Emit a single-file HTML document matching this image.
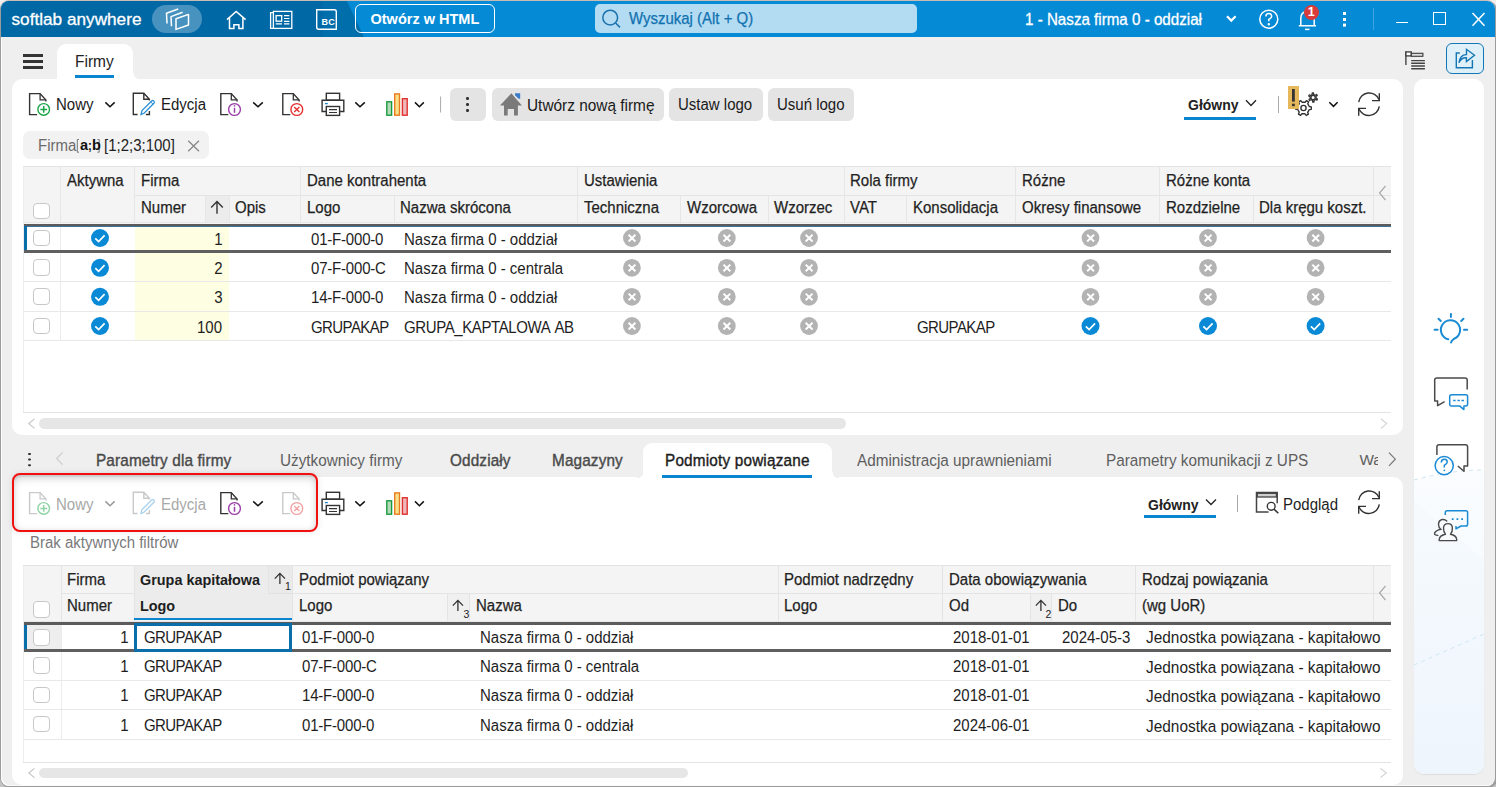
<!DOCTYPE html>
<html><head><meta charset="utf-8">
<style>
*{box-sizing:border-box;}
html,body{margin:0;padding:0;}
body{width:1496px;height:787px;position:relative;overflow:hidden;background:linear-gradient(#f2eeeb 0,#f2eeeb 50%,#c4c4c4 50%);font-family:"Liberation Sans",sans-serif;font-size:15px;color:#222;}
.a{position:absolute;}
.t{position:absolute;white-space:nowrap;line-height:1;}
#win{left:1px;top:1px;width:1494px;height:785px;border-radius:8px;background:#efefef;overflow:hidden;box-shadow:0 -1px 0 0 #c9bcb5,-1px 0 0 0 #9c9c9c,1px 1px 0 1px #9c9c9c,inset 1px -1px 0 0 #fbfbfb;}
#tb{left:0;top:0;width:1494px;height:36px;background:#058ad6;}
#tbdark{left:0;top:0;width:370px;height:36px;background:linear-gradient(90deg,#0068a5 0,#0068a5 322px,#006eab 322px);clip-path:polygon(0 0,346px 0,363px 36px,0 36px);}
.panel{background:#fff;border-radius:10px;}
</style></head>
<body>
<div id="win" class="a">
  <div id="tb" class="a"></div>
  <div id="tbdark" class="a"></div>
</div>

<!-- title bar content -->
<div class="t" style="left:11.5px;top:10.6px;font-size:17.2px;color:#fff;-webkit-text-stroke:0.3px #fff;">softlab anywhere</div>
<div class="a" style="left:152px;top:5px;width:50px;height:28px;border-radius:14px;background:rgba(255,255,255,0.28);"></div>
<svg class="a" style="left:160px;top:4px" width="36" height="30" viewBox="160 4 36 30" fill="none" stroke="#fff" stroke-width="1.5" stroke-linejoin="round">
 <path d="M167 23.5 L166.5 13.2 L178.2 9"/>
 <path d="M171.5 26.3 L171 16.6 L182.6 12.2"/>
 <path d="M176 18.8 L188.5 14.4 L188.5 25 L176 29.4 Z"/>
</svg>
<svg class="a" style="left:225px;top:9px" width="24" height="22" viewBox="225 9 24 22" fill="none" stroke="#fff" stroke-width="1.5">
 <path d="M227 19.6 L236.2 11.4 L245.6 19.6"/>
 <path d="M229.5 18 V28.6 H233.9 V24.7 H238.9 V28.6 H242.9 V18"/>
</svg>
<svg class="a" style="left:268px;top:9px" width="26" height="22" viewBox="268 9 26 22" fill="none" stroke="#fff" stroke-width="1.3">
 <rect x="273.4" y="11.4" width="18.4" height="17"/>
 <path d="M273.4 12.6 H270.6 V28.4 H273.4"/>
 <rect x="276.1" y="15.6" width="5.6" height="5.6"/>
 <path d="M284 15.6 H289.4 M284 18.5 H289.4 M284 21.3 H289.4 M275.8 23.9 H282 M284 23.9 H289.4" stroke-width="1.2"/>
</svg>
<svg class="a" style="left:314px;top:7px" width="25" height="25" viewBox="314 7 25 25" fill="none" stroke="#fff" stroke-width="1.4">
 <path d="M316.7 9.8 H334.3 Q336.3 9.8 336.3 11.8 V29.2 H318.7 Q316.7 29.2 316.7 27.2 Z"/>
</svg>
<div class="t" style="left:321.5px;top:18.2px;font-size:9px;font-weight:700;color:#fff;letter-spacing:0.3px;">BC</div>
<div class="a" style="left:355px;top:4px;width:140px;height:29px;border:1.8px solid #fff;border-radius:6px;"></div>
<div class="t" style="left:370.5px;top:12px;font-size:14.5px;font-weight:700;color:#fff;">Otwórz w HTML</div>
<div class="a" style="left:595px;top:4px;width:322px;height:29px;border-radius:5px;background:#b3dcf3;"></div>
<svg class="a" style="left:600px;top:6px" width="26" height="26" viewBox="600 6 26 26" fill="none" stroke="#1a72ad" stroke-width="1.5">
 <circle cx="610.2" cy="17.6" r="7.4"/>
 <path d="M615.6 23 L620 27.4"/>
</svg>
<div class="t" style="left:628.5px;top:11px;font-size:15.6px;color:#1272b0;-webkit-text-stroke:0.25px #1272b0;transform:scaleX(0.96);transform-origin:0 0;">Wyszukaj (Alt + Q)</div>
<div class="t" style="left:1025px;top:11.6px;font-size:15.8px;color:#fff;-webkit-text-stroke:0.3px #fff;transform:scaleX(0.96);transform-origin:0 0;">1 - Nasza firma 0 - oddział</div>
<svg class="a" style="left:1224px;top:13px" width="14" height="12" viewBox="1224 13 14 12" fill="none" stroke="#fff" stroke-width="2.2">
 <path d="M1227 16.3 L1231.3 20.6 L1235.6 16.3"/>
</svg>
<svg class="a" style="left:1256px;top:7px" width="26" height="24" viewBox="1256 7 26 24" fill="none" stroke="#fff" stroke-width="1.5">
 <circle cx="1268.8" cy="19.2" r="9"/>
 <path d="M1265.9 16.6 Q1265.9 13.6 1268.8 13.6 Q1271.7 13.6 1271.7 16.3 Q1271.7 18 1268.8 19.4 V21.3"/>
 <circle cx="1268.8" cy="24.2" r="0.5" fill="#fff"/>
</svg>
<svg class="a" style="left:1294px;top:5px" width="28" height="28" viewBox="1294 5 28 28" fill="none" stroke="#fff" stroke-width="1.5">
 <path d="M1300.8 25.8 V18.5 Q1300.8 11.5 1307.5 11.5 Q1314.2 11.5 1314.2 18.5 V25.8 M1298.8 25.8 H1316"/>
 <path d="M1305 29.4 H1309.5"/>
</svg>
<div class="a" style="left:1303.9px;top:4.5px;width:15.6px;height:15.6px;border-radius:50%;background:#d83b3b;"></div>
<div class="t" style="left:1307.8px;top:5.8px;font-size:12.5px;font-weight:700;color:#fff;">1</div>
<div class="a" style="left:1343px;top:12.3px;width:3.2px;height:3.2px;background:#fff;box-shadow:0 6px 0 #fff,0 11.6px 0 #fff;"></div>
<div class="a" style="left:1372.5px;top:8px;width:1.2px;height:22px;background:#3ea3e0;"></div>
<div class="a" style="left:1395.5px;top:21.6px;width:12.5px;height:1.6px;background:#fff;"></div>
<div class="a" style="left:1433.4px;top:12.3px;width:12.4px;height:12.4px;border:1.5px solid #fff;"></div>
<svg class="a" style="left:1470px;top:11px" width="17" height="17" viewBox="1470 11 17 17" fill="none" stroke="#fff" stroke-width="1.5">
 <path d="M1472.5 13 L1484.5 25.8 M1484.5 13 L1472.5 25.8"/>
</svg>

<!-- panels -->
<div class="a panel" style="left:12px;top:79px;width:1391px;height:356px;"></div>
<div class="a panel" style="left:12px;top:477px;width:1391px;height:308px;"></div>
<div class="a panel" style="left:1414px;top:79px;width:70px;height:695px;"></div>


<!-- tabs row 1 -->
<div class="a" style="left:23px;top:54px;width:20px;height:2.5px;background:#333;box-shadow:0 6px 0 #333,0 12px 0 #333;"></div>
<div class="a" style="left:57px;top:44px;width:76px;height:40px;background:#fff;border-radius:9px 9px 0 0;"></div>
<div class="a" style="left:75px;top:75px;width:39px;height:3px;background:#0a86d0;"></div>

<!-- top right icons -->
<svg class="a" style="left:1402px;top:48px" width="26" height="24" viewBox="1402 48 26 24" fill="none" stroke="#444">
 <path d="M1405.9 51.4 V65" stroke-width="1.4"/>
 <rect x="1405.9" y="51.9" width="5.4" height="4" fill="#fff" stroke="#3a3a3a" stroke-width="1.3"/>
 <rect x="1411.3" y="53.3" width="11.6" height="3" fill="#ddd" stroke="#3a3a3a" stroke-width="1.1"/>
 <path d="M1411.2 60.6 H1424.9 M1411.2 63.3 H1424.9 M1411.2 66 H1424.9 M1411.2 68.8 H1424.9" stroke-width="1.4" stroke="#444"/>
</svg>
<div class="a" style="left:1446px;top:43px;width:38px;height:31px;border:1.5px solid #1477b5;border-radius:6px;background:#dff0f9;"></div>
<svg class="a" style="left:1450px;top:46px" width="30" height="26" viewBox="1450 46 30 26" fill="none" stroke="#1477b5" stroke-width="1.4" stroke-linejoin="miter">
 <path d="M1459.8 53 H1456.3 V67.8 H1472.4 V60"/>
 <path d="M1459 62.8 Q1460 54.5 1466.5 54.6 V49.3 L1474.5 55.3 L1466.4 61.6 V57.8 Q1461.5 57.2 1459 62.8 Z"/>
</svg>

<!-- toolbar 1 -->
<svg class="a" style="left:0;top:80px" width="446" height="44" viewBox="0 80 446 44">
 <path d="M37.1 114.6 H29.6 V93.6 H40.10000000000001 L45.900000000000006 100.1 V101.6" fill="none" stroke="#333" stroke-width="1.4"/><path d="M40.10000000000001 93.6 V99.89999999999999 H45.900000000000006" fill="none" stroke="#333" stroke-width="1.3"/>
 <circle cx="43.7" cy="109.4" r="5.8" fill="#fff" stroke="#1aa548" stroke-width="1.4"/>
 <path d="M40.3 109.4 H47.1 M43.7 106 V112.8" stroke="#1aa548" stroke-width="1.5"/>
 <path d="M105.4 102.4 L110 106.8 L114.6 102.4" fill="none" stroke="#111" stroke-width="1.5"/>
 <path d="M137.6 114.5 H133.3 V93.3 H143.8 L149.4 99.2 V100.5 M143.8 93.3 V99.2 H149.4 M145.9 114.5 H149.4 V111" fill="none" stroke="#333" stroke-width="1.4"/>
 <path d="M141 114.6 L142 110.6 L151.6 101 Q152.8 100 153.9 101.1 Q154.9 102.2 153.9 103.3 L144.3 113 Z" fill="#fff" stroke="#2a8fd4" stroke-width="1.3"/>
 <path d="M150.8 102 L153 104.2" stroke="#2a8fd4" stroke-width="1"/>
 <path d="M228.3 114.6 H220.8 V93.6 H231.3 L237.10000000000002 100.1 V101.6" fill="none" stroke="#333" stroke-width="1.4"/><path d="M231.3 93.6 V99.89999999999999 H237.10000000000002" fill="none" stroke="#333" stroke-width="1.3"/>
 <circle cx="234.5" cy="109.5" r="5.9" fill="#fff" stroke="#9b3fa8" stroke-width="1.4"/>
 <path d="M234.5 107.8 V112.8" stroke="#9b3fa8" stroke-width="1.5"/><circle cx="234.5" cy="105.9" r="0.8" fill="#9b3fa8"/>
 <path d="M253.2 102.4 L258 106.8 L262.8 102.4" fill="none" stroke="#111" stroke-width="1.5"/>
 <path d="M290.3 114.6 H282.8 V93.6 H293.3 L299.1 100.1 V101.6" fill="none" stroke="#333" stroke-width="1.4"/><path d="M293.3 93.6 V99.89999999999999 H299.1" fill="none" stroke="#333" stroke-width="1.3"/>
 <circle cx="296.8" cy="109.5" r="5.9" fill="#fff" stroke="#e63232" stroke-width="1.4"/>
 <path d="M294.2 106.9 L299.4 112.1 M299.4 106.9 L294.2 112.1" stroke="#e63232" stroke-width="1.4"/>
 <g fill="none" stroke="#333" stroke-width="1.4">
  <rect x="326.3" y="93.3" width="13.3" height="6.9"/>
  <path d="M326.3 111.5 H322.1 V100.2 H343.8 V111.5 H339.6"/>
  <rect x="326.3" y="106.5" width="13.3" height="8.9" fill="#fff"/>
  <path d="M329 109.6 H337 M329 112.5 H337" stroke-width="1.2"/>
 </g>
 <path d="M325 103.6 H327.8" stroke="#1a86d0" stroke-width="1.3"/>
 <path d="M355.3 102.4 L360 106.8 L364.8 102.4" fill="none" stroke="#111" stroke-width="1.5"/>
 <rect x="386.8" y="101.8" width="4.8" height="13.4" fill="#b5dbb8" stroke="#1a9a40" stroke-width="1.4"/>
 <rect x="394.7" y="93.9" width="4.8" height="21.3" fill="#f8e08a" stroke="#e87a20" stroke-width="1.4"/>
 <rect x="402.4" y="98.7" width="4.8" height="16.5" fill="#f0b8b8" stroke="#e03030" stroke-width="1.4"/>
 <path d="M415 102.4 L419.4 106.8 L423.8 102.4" fill="none" stroke="#111" stroke-width="1.5"/>
 <path d="M440.6 96.5 V112.5" stroke="#aaa" stroke-width="1"/>
</svg>
<div class="a" style="left:450px;top:88px;width:36px;height:33px;border-radius:6px;background:#e4e4e4;"></div>
<div class="a" style="left:466px;top:96.5px;width:3px;height:3px;border-radius:40%;background:#333;box-shadow:0 6px 0 #333,0 12px 0 #333;"></div>
<div class="a" style="left:492px;top:88px;width:172px;height:33px;border-radius:6px;background:#e4e4e4;"></div>
<svg class="a" style="left:498px;top:90px" width="28" height="28" viewBox="498 90 28 28">
 <path d="M511.4 93.3 L500 105.5 H504 V115.6 H507.7 V109 H514 V115.6 H517.9 V105.5 H522 L516.6 99.5 Z" fill="#7a7a7a"/>
 <path d="M515 93.2 H520.2 V98.8 H518.6 L515 95.2 Z" fill="#3a7cc8"/>
</svg>
<div class="a" style="left:669px;top:88px;width:94px;height:33px;border-radius:6px;background:#e4e4e4;"></div>
<div class="a" style="left:768px;top:88px;width:86px;height:33px;border-radius:6px;background:#e4e4e4;"></div>

<svg class="a" style="left:1244px;top:98px" width="14" height="10" viewBox="1244 98 14 10" fill="none" stroke="#222" stroke-width="1.3"><path d="M1246 100.3 L1251 105.5 L1256 100.3"/></svg>
<div class="a" style="left:1184px;top:117px;width:72px;height:3px;background:#0a86d0;"></div>
<div class="a" style="left:1277.5px;top:96px;width:1px;height:17px;background:#aaa;"></div>
<svg class="a" style="left:1286px;top:84px" width="56" height="36" viewBox="1286 84 56 36">
 <path d="M1316.04 98.10 L1317.46 98.97 L1316.90 100.09 L1315.35 99.49 L1314.05 100.34 L1314.00 102.01 L1312.76 102.09 L1312.50 100.44 L1311.11 99.75 L1309.65 100.54 L1308.96 99.50 L1310.26 98.45 L1310.16 96.90 L1308.74 96.03 L1309.30 94.91 L1310.85 95.51 L1312.15 94.66 L1312.20 92.99 L1313.44 92.91 L1313.70 94.56 L1315.09 95.25 L1316.55 94.46 L1317.24 95.50 L1315.94 96.55 Z" fill="#fff" stroke="#333" stroke-width="1.3" stroke-linejoin="round"/><circle cx="1313.1" cy="97.5" r="2.1" fill="none" stroke="#333" stroke-width="1.2"/><path d="M1309.31 106.52 L1311.32 106.86 L1311.29 109.33 L1309.28 109.62 L1307.69 112.29 L1308.40 114.20 L1306.24 115.41 L1304.98 113.81 L1301.88 113.78 L1300.58 115.34 L1298.46 114.08 L1299.21 112.19 L1297.69 109.48 L1295.68 109.14 L1295.71 106.67 L1297.72 106.38 L1299.31 103.71 L1298.60 101.80 L1300.76 100.59 L1302.02 102.19 L1305.12 102.22 L1306.42 100.66 L1308.54 101.92 L1307.79 103.81 Z" fill="#fff" stroke="#333" stroke-width="1.4" stroke-linejoin="round"/><circle cx="1303.5" cy="108" r="2.6" fill="none" stroke="#333" stroke-width="1.4"/>
 <rect x="1288" y="86" width="11" height="23" fill="#e6b85c"/>
 <rect x="1292" y="89" width="2.8" height="12.6" fill="#333"/>
 <rect x="1292" y="103.7" width="2.8" height="2.5" fill="#333"/>
 <path d="M1329.3 102.3 L1333.5 106.4 L1337.6 102.3" fill="none" stroke="#111" stroke-width="1.5"/>
</svg>
<svg class="a" style="left:1350px;top:86px" width="40" height="36" viewBox="1350 86 40 36" fill="none" stroke="#333" stroke-width="1.4">
 <path d="M1358.7 102.2 A10.6 10.6 0 0 1 1379 99.5"/>
 <path d="M1379.3 93.3 V100.6 H1372"/>
 <path d="M1379.3 106.4 A10.6 10.6 0 0 1 1359 108.9"/>
 <path d="M1358.7 115.7 V108.4 H1366"/>
</svg>

<div class="t" style="left:56.2px;top:97.39px;font-size:15.60px;color:#1a1a1a;font-weight:400;transform:scaleX(0.9615);transform-origin:0 0;">Nowy</div>
<div class="t" style="left:160.5px;top:97.39px;font-size:15.60px;color:#1a1a1a;font-weight:400;transform:scaleX(0.9615);transform-origin:0 0;">Edycja</div>
<div class="t" style="left:526.8px;top:97.04px;font-size:16.02px;color:#1a1a1a;font-weight:400;transform:scaleX(0.9615);transform-origin:0 0;">Utwórz nową firmę</div>
<div class="t" style="left:678px;top:97.39px;font-size:15.60px;color:#1a1a1a;font-weight:400;transform:scaleX(0.9615);transform-origin:0 0;">Ustaw logo</div>
<div class="t" style="left:776.8px;top:97.39px;font-size:15.60px;color:#1a1a1a;font-weight:400;transform:scaleX(0.9615);transform-origin:0 0;">Usuń logo</div>
<div class="t" style="left:1188px;top:98.47px;font-size:14.56px;color:#222;font-weight:700;transform:scaleX(0.9615);transform-origin:0 0;">Główny</div>
<div class="t" style="left:75.3px;top:53.15px;font-size:16.12px;color:#222;font-weight:400;transform:scaleX(0.9615);transform-origin:0 0;">Firmy</div>
<div class="a" style="left:23px;top:131px;width:186px;height:28px;background:#f2f2f2;border-radius:7px;"></div>
<div class="t" style="left:37.5px;top:138.39px;font-size:15.60px;color:#6b6b6b;font-weight:400;transform:scaleX(0.9615);transform-origin:0 0;">Firma</div>
<svg class="a" style="left:76px;top:134px" width="26" height="22" viewBox="76 134 26 22"><path d="M79 139.5 H77.3 V152.2 H79 M97.5 139.5 H99.2 V152.2 H97.5" fill="none" stroke="#777" stroke-width="1"/></svg>
<div class="t" style="left:79.5px;top:137.03px;font-size:15.08px;color:#111;font-weight:700;transform:scaleX(0.9615);transform-origin:0 0;">a<span style="font-size:12px">;</span>b</div>
<div class="t" style="left:104px;top:138.39px;font-size:15.60px;color:#1e1e1e;font-weight:400;transform:scaleX(0.9615);transform-origin:0 0;">[1;2;3;100]</div>
<svg class="a" style="left:186px;top:139px" width="15" height="15" viewBox="186 139 15 15"><path d="M188.2 140.8 L199 151.3 M199 140.8 L188.2 151.3" stroke="#888" stroke-width="1.3"/></svg>
<div class="a" style="left:23px;top:166px;width:1368px;height:1px;background:#e4e4e4;"></div>
<div class="a" style="left:23px;top:167px;width:1368px;height:57px;background:#f4f4f4;"></div>
<div class="a" style="left:205px;top:196px;width:23.6px;height:27px;background:#ececec;"></div>
<div class="a" style="left:134px;top:195px;width:1257px;height:1px;background:#e4e4e4;"></div>
<div class="a" style="left:23px;top:222px;width:1368px;height:1px;background:#e8e8e8;"></div>
<div class="a" style="left:60px;top:167px;width:1px;height:56px;background:#e6e6e6;"></div>
<div class="a" style="left:134px;top:167px;width:1px;height:56px;background:#e6e6e6;"></div>
<div class="a" style="left:300px;top:167px;width:1px;height:56px;background:#e6e6e6;"></div>
<div class="a" style="left:577px;top:167px;width:1px;height:56px;background:#e6e6e6;"></div>
<div class="a" style="left:844px;top:167px;width:1px;height:56px;background:#e6e6e6;"></div>
<div class="a" style="left:1015px;top:167px;width:1px;height:56px;background:#e6e6e6;"></div>
<div class="a" style="left:1159px;top:167px;width:1px;height:56px;background:#e6e6e6;"></div>
<div class="a" style="left:1373px;top:167px;width:1px;height:56px;background:#e6e6e6;"></div>
<div class="a" style="left:205px;top:196px;width:1px;height:27px;background:#e6e6e6;"></div>
<div class="a" style="left:228.6px;top:196px;width:1px;height:27px;background:#e6e6e6;"></div>
<div class="a" style="left:393.5px;top:196px;width:1px;height:27px;background:#e6e6e6;"></div>
<div class="a" style="left:680px;top:196px;width:1px;height:27px;background:#e6e6e6;"></div>
<div class="a" style="left:767.6px;top:196px;width:1px;height:27px;background:#e6e6e6;"></div>
<div class="a" style="left:906px;top:196px;width:1px;height:27px;background:#e6e6e6;"></div>
<div class="a" style="left:1252.6px;top:196px;width:1px;height:27px;background:#e6e6e6;"></div>
<div class="a" style="left:33px;top:202.5px;width:17px;height:16.5px;border:1.3px solid #c8c8c8;border-radius:4px;background:#fff;"></div>
<div class="t" style="left:67px;top:172.99px;font-size:15.60px;color:#1e1e1e;font-weight:400;transform:scaleX(0.9615);transform-origin:0 0;-webkit-text-stroke:0.25px #2a2a2a;">Aktywna</div>
<div class="t" style="left:141.4px;top:172.99px;font-size:15.60px;color:#1e1e1e;font-weight:400;transform:scaleX(0.9615);transform-origin:0 0;-webkit-text-stroke:0.25px #2a2a2a;">Firma</div>
<div class="t" style="left:306.5px;top:172.99px;font-size:15.60px;color:#1e1e1e;font-weight:400;transform:scaleX(0.9615);transform-origin:0 0;-webkit-text-stroke:0.25px #2a2a2a;">Dane kontrahenta</div>
<div class="t" style="left:583.8px;top:172.99px;font-size:15.60px;color:#1e1e1e;font-weight:400;transform:scaleX(0.9615);transform-origin:0 0;-webkit-text-stroke:0.25px #2a2a2a;">Ustawienia</div>
<div class="t" style="left:849.5px;top:172.99px;font-size:15.60px;color:#1e1e1e;font-weight:400;transform:scaleX(0.9615);transform-origin:0 0;-webkit-text-stroke:0.25px #2a2a2a;">Rola firmy</div>
<div class="t" style="left:1021.5px;top:172.99px;font-size:15.60px;color:#1e1e1e;font-weight:400;transform:scaleX(0.9615);transform-origin:0 0;-webkit-text-stroke:0.25px #2a2a2a;">Różne</div>
<div class="t" style="left:1165.8px;top:172.99px;font-size:15.60px;color:#1e1e1e;font-weight:400;transform:scaleX(0.9615);transform-origin:0 0;-webkit-text-stroke:0.25px #2a2a2a;">Różne konta</div>
<div class="t" style="left:141.4px;top:200.19px;font-size:15.60px;color:#1e1e1e;font-weight:400;transform:scaleX(0.9615);transform-origin:0 0;-webkit-text-stroke:0.25px #2a2a2a;">Numer</div>
<div class="t" style="left:234.5px;top:200.19px;font-size:15.60px;color:#1e1e1e;font-weight:400;transform:scaleX(0.9615);transform-origin:0 0;-webkit-text-stroke:0.25px #2a2a2a;">Opis</div>
<div class="t" style="left:306.5px;top:200.19px;font-size:15.60px;color:#1e1e1e;font-weight:400;transform:scaleX(0.9615);transform-origin:0 0;-webkit-text-stroke:0.25px #2a2a2a;">Logo</div>
<div class="t" style="left:400px;top:200.19px;font-size:15.60px;color:#1e1e1e;font-weight:400;transform:scaleX(0.9615);transform-origin:0 0;-webkit-text-stroke:0.25px #2a2a2a;">Nazwa skrócona</div>
<div class="t" style="left:583.8px;top:200.19px;font-size:15.60px;color:#1e1e1e;font-weight:400;transform:scaleX(0.9615);transform-origin:0 0;-webkit-text-stroke:0.25px #2a2a2a;">Techniczna</div>
<div class="t" style="left:687px;top:200.19px;font-size:15.60px;color:#1e1e1e;font-weight:400;transform:scaleX(0.9615);transform-origin:0 0;-webkit-text-stroke:0.25px #2a2a2a;">Wzorcowa</div>
<div class="t" style="left:774px;top:200.19px;font-size:15.60px;color:#1e1e1e;font-weight:400;transform:scaleX(0.9615);transform-origin:0 0;-webkit-text-stroke:0.25px #2a2a2a;">Wzorzec</div>
<div class="t" style="left:849.5px;top:200.19px;font-size:15.60px;color:#1e1e1e;font-weight:400;transform:scaleX(0.9615);transform-origin:0 0;-webkit-text-stroke:0.25px #2a2a2a;">VAT</div>
<div class="t" style="left:913px;top:200.19px;font-size:15.60px;color:#1e1e1e;font-weight:400;transform:scaleX(0.9615);transform-origin:0 0;-webkit-text-stroke:0.25px #2a2a2a;">Konsolidacja</div>
<div class="t" style="left:1021.5px;top:200.19px;font-size:15.60px;color:#1e1e1e;font-weight:400;transform:scaleX(0.9615);transform-origin:0 0;-webkit-text-stroke:0.25px #2a2a2a;">Okresy finansowe</div>
<div class="t" style="left:1165.8px;top:200.19px;font-size:15.60px;color:#1e1e1e;font-weight:400;transform:scaleX(0.9615);transform-origin:0 0;-webkit-text-stroke:0.25px #2a2a2a;">Rozdzielne</div>
<div class="t" style="left:1258.5px;top:200.19px;font-size:15.60px;color:#1e1e1e;font-weight:400;transform:scaleX(0.9615);transform-origin:0 0;-webkit-text-stroke:0.25px #2a2a2a;">Dla kręgu koszt.</div>
<svg class="a" style="left:205px;top:196px" width="24" height="27" viewBox="205 196 24 27"><path d="M217 213.8 V201.8 M211.2 207.5 L217 201.6 L222.8 207.5" fill="none" stroke="#333" stroke-width="1.4"/></svg>
<svg class="a" style="left:1374px;top:170px" width="17" height="50" viewBox="1374 170 17 50"><path d="M1385.5 186 L1379.5 193 L1385.5 200" fill="none" stroke="#aaa" stroke-width="1.2"/></svg>
<div class="a" style="left:135px;top:226px;width:93.6px;height:114px;background:#fefee2;"></div>
<div class="a" style="left:60px;top:226px;width:1px;height:114px;background:#ececec;"></div>
<div class="a" style="left:23px;top:281px;width:1368px;height:1px;background:#e8e8e8;"></div>
<div class="a" style="left:23px;top:311px;width:1368px;height:1px;background:#e8e8e8;"></div>
<div class="a" style="left:23px;top:340px;width:1368px;height:1px;background:#e8e8e8;"></div>
<div class="a" style="left:33px;top:229.5px;width:17px;height:16.5px;border:1.3px solid #c8c8c8;border-radius:4px;background:#fff;"></div>
<div class="t" style="right:1273.5px;top:231.79px;font-size:15.60px;color:#1e1e1e;font-weight:400;transform:scaleX(0.9615);transform-origin:100% 0;">1</div>
<div class="t" style="left:310.8px;top:231.79px;font-size:15.60px;color:#1e1e1e;font-weight:400;transform:scaleX(0.9615);transform-origin:0 0;letter-spacing:-0.2px;">01-F-000-0</div>
<div class="t" style="left:404.3px;top:231.79px;font-size:15.60px;color:#1e1e1e;font-weight:400;transform:scaleX(0.9615);transform-origin:0 0;">Nasza firma 0 - oddział</div>
<div class="a" style="left:33px;top:259.3px;width:17px;height:16.5px;border:1.3px solid #c8c8c8;border-radius:4px;background:#fff;"></div>
<div class="t" style="right:1273.5px;top:260.99px;font-size:15.60px;color:#1e1e1e;font-weight:400;transform:scaleX(0.9615);transform-origin:100% 0;">2</div>
<div class="t" style="left:310.8px;top:260.99px;font-size:15.60px;color:#1e1e1e;font-weight:400;transform:scaleX(0.9615);transform-origin:0 0;letter-spacing:-0.2px;">07-F-000-C</div>
<div class="t" style="left:404.3px;top:260.99px;font-size:15.60px;color:#1e1e1e;font-weight:400;transform:scaleX(0.9615);transform-origin:0 0;">Nasza firma 0 - centrala</div>
<div class="a" style="left:33px;top:288.3px;width:17px;height:16.5px;border:1.3px solid #c8c8c8;border-radius:4px;background:#fff;"></div>
<div class="t" style="right:1273.5px;top:290.29px;font-size:15.60px;color:#1e1e1e;font-weight:400;transform:scaleX(0.9615);transform-origin:100% 0;">3</div>
<div class="t" style="left:310.8px;top:290.29px;font-size:15.60px;color:#1e1e1e;font-weight:400;transform:scaleX(0.9615);transform-origin:0 0;letter-spacing:-0.2px;">14-F-000-0</div>
<div class="t" style="left:404.3px;top:290.29px;font-size:15.60px;color:#1e1e1e;font-weight:400;transform:scaleX(0.9615);transform-origin:0 0;">Nasza firma 0 - oddział</div>
<div class="a" style="left:33px;top:317.5px;width:17px;height:16.5px;border:1.3px solid #c8c8c8;border-radius:4px;background:#fff;"></div>
<div class="t" style="right:1273.5px;top:319.99px;font-size:15.60px;color:#1e1e1e;font-weight:400;transform:scaleX(0.9615);transform-origin:100% 0;">100</div>
<div class="t" style="left:310.8px;top:319.99px;font-size:15.60px;color:#1e1e1e;font-weight:400;transform:scaleX(0.9615);transform-origin:0 0;letter-spacing:-0.6px;">GRUPAKAP</div>
<div class="t" style="left:404.3px;top:319.99px;font-size:15.60px;color:#1e1e1e;font-weight:400;transform:scaleX(0.9615);transform-origin:0 0;letter-spacing:-0.4px;word-spacing:2px;">GRUPA_KAPTALOWA AB</div>
<div class="t" style="left:917px;top:319.99px;font-size:15.60px;color:#1e1e1e;font-weight:400;transform:scaleX(0.9615);transform-origin:0 0;letter-spacing:-0.6px;">GRUPAKAP</div>
<svg class="a" style="left:0;top:220px" width="1400" height="125" viewBox="0 220 1400 125"><circle cx="100" cy="238" r="9" fill="#0a8ad6"/><path d="M95.3 238.3 L98.6 241.5 L104.6 235.3" fill="none" stroke="#fff" stroke-width="1.7"/><circle cx="631.9" cy="238" r="8.9" fill="#b3b3b3"/><path d="M628.6 234.8 L635.4 241.5 M635.4 234.8 L628.6 241.5" fill="none" stroke="#fff" stroke-width="2"/><circle cx="726.8" cy="238" r="8.9" fill="#b3b3b3"/><path d="M723.5 234.8 L730.3 241.5 M730.3 234.8 L723.5 241.5" fill="none" stroke="#fff" stroke-width="2"/><circle cx="809" cy="238" r="8.9" fill="#b3b3b3"/><path d="M805.7 234.8 L812.5 241.5 M812.5 234.8 L805.7 241.5" fill="none" stroke="#fff" stroke-width="2"/><circle cx="1090.5" cy="238" r="8.9" fill="#b3b3b3"/><path d="M1087.2 234.8 L1094.0 241.5 M1094.0 234.8 L1087.2 241.5" fill="none" stroke="#fff" stroke-width="2"/><circle cx="1208" cy="238" r="8.9" fill="#b3b3b3"/><path d="M1204.7 234.8 L1211.5 241.5 M1211.5 234.8 L1204.7 241.5" fill="none" stroke="#fff" stroke-width="2"/><circle cx="1315.6" cy="238" r="8.9" fill="#b3b3b3"/><path d="M1312.3 234.8 L1319.1 241.5 M1319.1 234.8 L1312.3 241.5" fill="none" stroke="#fff" stroke-width="2"/><circle cx="100" cy="267.8" r="9" fill="#0a8ad6"/><path d="M95.3 268.1 L98.6 271.3 L104.6 265.1" fill="none" stroke="#fff" stroke-width="1.7"/><circle cx="631.9" cy="267.8" r="8.9" fill="#b3b3b3"/><path d="M628.6 264.6 L635.4 271.3 M635.4 264.6 L628.6 271.3" fill="none" stroke="#fff" stroke-width="2"/><circle cx="726.8" cy="267.8" r="8.9" fill="#b3b3b3"/><path d="M723.5 264.6 L730.3 271.3 M730.3 264.6 L723.5 271.3" fill="none" stroke="#fff" stroke-width="2"/><circle cx="809" cy="267.8" r="8.9" fill="#b3b3b3"/><path d="M805.7 264.6 L812.5 271.3 M812.5 264.6 L805.7 271.3" fill="none" stroke="#fff" stroke-width="2"/><circle cx="1090.5" cy="267.8" r="8.9" fill="#b3b3b3"/><path d="M1087.2 264.6 L1094.0 271.3 M1094.0 264.6 L1087.2 271.3" fill="none" stroke="#fff" stroke-width="2"/><circle cx="1208" cy="267.8" r="8.9" fill="#b3b3b3"/><path d="M1204.7 264.6 L1211.5 271.3 M1211.5 264.6 L1204.7 271.3" fill="none" stroke="#fff" stroke-width="2"/><circle cx="1315.6" cy="267.8" r="8.9" fill="#b3b3b3"/><path d="M1312.3 264.6 L1319.1 271.3 M1319.1 264.6 L1312.3 271.3" fill="none" stroke="#fff" stroke-width="2"/><circle cx="100" cy="296.8" r="9" fill="#0a8ad6"/><path d="M95.3 297.1 L98.6 300.3 L104.6 294.1" fill="none" stroke="#fff" stroke-width="1.7"/><circle cx="631.9" cy="296.8" r="8.9" fill="#b3b3b3"/><path d="M628.6 293.6 L635.4 300.3 M635.4 293.6 L628.6 300.3" fill="none" stroke="#fff" stroke-width="2"/><circle cx="726.8" cy="296.8" r="8.9" fill="#b3b3b3"/><path d="M723.5 293.6 L730.3 300.3 M730.3 293.6 L723.5 300.3" fill="none" stroke="#fff" stroke-width="2"/><circle cx="809" cy="296.8" r="8.9" fill="#b3b3b3"/><path d="M805.7 293.6 L812.5 300.3 M812.5 293.6 L805.7 300.3" fill="none" stroke="#fff" stroke-width="2"/><circle cx="1090.5" cy="296.8" r="8.9" fill="#b3b3b3"/><path d="M1087.2 293.6 L1094.0 300.3 M1094.0 293.6 L1087.2 300.3" fill="none" stroke="#fff" stroke-width="2"/><circle cx="1208" cy="296.8" r="8.9" fill="#b3b3b3"/><path d="M1204.7 293.6 L1211.5 300.3 M1211.5 293.6 L1204.7 300.3" fill="none" stroke="#fff" stroke-width="2"/><circle cx="1315.6" cy="296.8" r="8.9" fill="#b3b3b3"/><path d="M1312.3 293.6 L1319.1 300.3 M1319.1 293.6 L1312.3 300.3" fill="none" stroke="#fff" stroke-width="2"/><circle cx="100" cy="326" r="9" fill="#0a8ad6"/><path d="M95.3 326.3 L98.6 329.5 L104.6 323.3" fill="none" stroke="#fff" stroke-width="1.7"/><circle cx="631.9" cy="326" r="8.9" fill="#b3b3b3"/><path d="M628.6 322.8 L635.4 329.5 M635.4 322.8 L628.6 329.5" fill="none" stroke="#fff" stroke-width="2"/><circle cx="726.8" cy="326" r="8.9" fill="#b3b3b3"/><path d="M723.5 322.8 L730.3 329.5 M730.3 322.8 L723.5 329.5" fill="none" stroke="#fff" stroke-width="2"/><circle cx="809" cy="326" r="8.9" fill="#b3b3b3"/><path d="M805.7 322.8 L812.5 329.5 M812.5 322.8 L805.7 329.5" fill="none" stroke="#fff" stroke-width="2"/><circle cx="1090.5" cy="326" r="9" fill="#0a8ad6"/><path d="M1085.8 326.3 L1089.1 329.5 L1095.1 323.3" fill="none" stroke="#fff" stroke-width="1.7"/><circle cx="1208" cy="326" r="9" fill="#0a8ad6"/><path d="M1203.3 326.3 L1206.6 329.5 L1212.6 323.3" fill="none" stroke="#fff" stroke-width="1.7"/><circle cx="1315.6" cy="326" r="9" fill="#0a8ad6"/><path d="M1310.8999999999999 326.3 L1314.1999999999998 329.5 L1320.1999999999998 323.3" fill="none" stroke="#fff" stroke-width="1.7"/></svg>
<div class="a" style="left:23px;top:224px;width:1368px;height:2px;background:#5b5b5b;"></div>
<div class="a" style="left:23px;top:226px;width:1368px;height:1px;background:#3e7299;"></div>
<div class="a" style="left:23px;top:250px;width:1368px;height:3px;background:#5f5f5f;"></div>
<div class="a" style="left:23px;top:226px;width:3.5px;height:24px;background:#0a6eab;"></div>
<div class="a" style="left:23px;top:167px;width:1px;height:246px;background:#ededed;"></div>
<div class="a" style="left:23px;top:412px;width:1368px;height:1px;background:#e4e4e4;"></div>
<svg class="a" style="left:26px;top:416px" width="12" height="14" viewBox="26 416 12 14"><path d="M34.5 418.8 L28.8 423.6 L34.5 428.4" fill="none" stroke="#c4c4c4" stroke-width="1.1"/></svg>
<div class="a" style="left:39px;top:418px;width:807px;height:10.5px;background:#e6e6e6;border-radius:6px;"></div>
<svg class="a" style="left:1378px;top:416px" width="12" height="14" viewBox="1378 416 12 14"><path d="M1381 418.8 L1386.7 423.6 L1381 428.4" fill="none" stroke="#d0d0d0" stroke-width="1.1"/></svg>
<div class="a" style="left:1414px;top:79px;width:70px;height:695px;border-radius:10px;overflow:hidden;background:#fff;box-shadow:0 1px 1px rgba(0,0,0,0.08);">
<svg width="70" height="695" viewBox="1414 79 70 695" style="position:absolute;left:0;top:0">
<defs><linearGradient id="spg" x1="0" y1="0" x2="0" y2="1"><stop offset="0" stop-color="#f7fbfe"/><stop offset="1" stop-color="#eef5fc"/></linearGradient></defs>
<path d="M1414 480 Q1450 470 1484 470 V774 H1414 Z" fill="url(#spg)"/>
<path d="M1414 500 L1484 560 V470 Q1450 470 1414 480 Z" fill="#ffffff" opacity="0.35"/>
<path d="M1414 480 Q1450 470 1484 470" fill="none" stroke="#cfe6f4" stroke-width="1" stroke-dasharray="4 4"/>
<path d="M1414 665 L1484 634" fill="none" stroke="#cfe6f4" stroke-width="1" stroke-dasharray="4 4"/>
</svg></div>
<svg class="a" style="left:1414px;top:300px" width="70" height="250" viewBox="1414 300 70 250" fill="none" stroke-linecap="round">
<g stroke="#1a8ad4" stroke-width="2">
 <path d="M1448.3 339.3 A9.6 9.6 0 1 1 1453.7 339 Q1451.5 340.5 1451 342.6"/>
 <path d="M1450.9 314 V317 M1434.6 329.7 H1437.6 M1464 329.7 H1467.2 M1438.5 318.8 L1440.8 321 M1463.5 318.8 L1461.2 321"/>
</g>
<path d="M1467.2 389.5 V380 Q1467.2 377.9 1465 377.9 H1436.9 Q1434.7 377.9 1434.7 380 V401 H1437.6 V405.7 L1444.6 401.7" stroke="#4a4a4a" stroke-width="1.5" stroke-linecap="butt" stroke-linejoin="round"/>
<path d="M1451.5 394.7 H1465.8 Q1467.6 394.7 1467.6 396.5 V404.2 Q1467.6 405.9 1465.8 405.9 H1463.9 V409.6 L1459.6 405.9 H1451.5 Q1449.7 405.9 1449.7 404.2 V396.5 Q1449.7 394.7 1451.5 394.7 Z" fill="#fff" stroke="#1a8ad4" stroke-width="1.5" stroke-linejoin="round"/>
<path d="M1453.2 400.6 H1455.6 M1457.4 400.6 H1459.8 M1461.5 400.6 H1463.9" stroke="#1a8ad4" stroke-width="1.5" stroke-linecap="butt"/>
<path d="M1436.9 455 V446.9 Q1436.9 444.7 1439.1 444.7 H1465.4 Q1467.6 444.7 1467.6 446.9 V466 H1464 V471.3 L1457.8 466" stroke="#4a4a4a" stroke-width="1.5" stroke-linecap="butt" stroke-linejoin="round"/>
<circle cx="1444.2" cy="465.6" r="9.1" fill="#fff" stroke="#1a8ad4" stroke-width="1.5"/>
<path d="M1441.3 462.6 Q1441.3 459.3 1444.3 459.3 Q1447.2 459.3 1447.2 462 Q1447.2 463.8 1444.3 465.3 V467.4" stroke="#1a8ad4" stroke-width="1.5" stroke-linecap="butt"/>
<circle cx="1444.3" cy="470.3" r="0.9" fill="#1a8ad4"/>
<path d="M1445.3 515 V512.5 Q1445.3 510.7 1447.1 510.7 H1465.8 Q1467.6 510.7 1467.6 512.5 V524.2 Q1467.6 526 1465.8 526 H1461 L1456 528.9 V526" stroke="#1a8ad4" stroke-width="1.5" stroke-linejoin="round" stroke-linecap="butt"/>
<path d="M1451.8 519.1 H1453.6 M1456.5 519.1 H1458.3 M1461.2 519.1 H1463" stroke="#1a8ad4" stroke-width="1.6" stroke-linecap="butt"/>
<path d="M1446.8 520.9 Q1445 519.2 1442.2 519.5 Q1438.6 520.2 1438.5 524.5 Q1438.6 527.6 1440.8 529.2 Q1436 530.3 1434.6 533 Q1434.2 535.3 1437.8 535.4" stroke="#4a4a4a" stroke-width="1.4"/>
<path d="M1445.5 534.2 Q1443.4 532 1443.5 527.8 Q1443.8 523.6 1448 523.6 Q1452.2 523.6 1452.4 527.8 Q1452.6 532 1450.5 534.2 Q1456.4 535.3 1456.7 539.5 V540.6 H1439.2 V539.5 Q1439.6 535.3 1445.5 534.2 Z" fill="#f7fbfe" stroke="#4a4a4a" stroke-width="1.4" stroke-linejoin="round"/>
</svg>
<div class="a" style="left:28.2px;top:453px;width:2.4px;height:2.4px;background:#333;border-radius:50%;box-shadow:0 5.6px 0 #333,0 11.2px 0 #333;"></div>
<svg class="a" style="left:52px;top:448px" width="16" height="20" viewBox="52 448 16 20"><path d="M62.6 452.3 L56.6 458.5 L62.6 464.7" fill="none" stroke="#ccc" stroke-width="1.2"/></svg>
<div class="a" style="left:643px;top:443px;width:189px;height:40px;background:#fff;border-radius:9px 9px 0 0;"></div>
<div class="a" style="left:636.5px;top:471.5px;width:6.5px;height:6.5px;background:radial-gradient(circle at 0 0, #efefef 6px, #fff 6.6px);"></div>
<div class="a" style="left:832px;top:471.5px;width:6.5px;height:6.5px;background:radial-gradient(circle at 100% 0, #efefef 6px, #fff 6.6px);"></div>
<div class="a" style="left:133px;top:72.5px;width:6.5px;height:6.5px;background:radial-gradient(circle at 100% 0, #efefef 6px, #fff 6.6px);"></div>
<div class="t" style="left:96.2px;top:452.73px;font-size:15.91px;color:#4a4a4a;font-weight:400;transform:scaleX(0.9615);transform-origin:0 0;-webkit-text-stroke:0.4px #4a4a4a;letter-spacing:0.15px;">Parametry dla firmy</div>
<div class="t" style="left:280px;top:452.73px;font-size:15.91px;color:#5e5e5e;font-weight:400;transform:scaleX(0.9615);transform-origin:0 0;">Użytkownicy firmy</div>
<div class="t" style="left:449.8px;top:452.73px;font-size:15.91px;color:#4a4a4a;font-weight:400;transform:scaleX(0.9615);transform-origin:0 0;-webkit-text-stroke:0.4px #4a4a4a;letter-spacing:0.15px;">Oddziały</div>
<div class="t" style="left:551.6px;top:452.73px;font-size:15.91px;color:#4a4a4a;font-weight:400;transform:scaleX(0.9615);transform-origin:0 0;-webkit-text-stroke:0.4px #4a4a4a;letter-spacing:0.15px;">Magazyny</div>
<div class="t" style="left:665px;top:452.73px;font-size:15.91px;color:#1e1e1e;font-weight:400;transform:scaleX(0.9615);transform-origin:0 0;-webkit-text-stroke:0.4px #1e1e1e;letter-spacing:0.2px;">Podmioty powiązane</div>
<div class="a" style="left:662px;top:475px;width:150px;height:3px;background:#0a86d0;"></div>
<div class="t" style="left:857.3px;top:452.73px;font-size:15.91px;color:#5e5e5e;font-weight:400;transform:scaleX(0.9615);transform-origin:0 0;">Administracja uprawnieniami</div>
<div class="t" style="left:1106px;top:452.73px;font-size:15.91px;color:#5e5e5e;font-weight:400;transform:scaleX(0.9615);transform-origin:0 0;">Parametry komunikacji z UPS</div>
<div class="a" style="left:1359px;top:450px;width:19px;height:22px;overflow:hidden;"><div class="t" style="left:0.5px;top:2px;font-size:15.3px;color:#5e5e5e;">Wa</div></div>
<svg class="a" style="left:1384px;top:448px" width="16" height="20" viewBox="1384 448 16 20"><path d="M1389 452.6 L1395.3 459.2 L1389 465.8" fill="none" stroke="#777" stroke-width="1.2"/></svg>
<svg class="a" style="left:0;top:478.5px" width="446" height="44" viewBox="0 478.5 446 44">
 <path d="M37.1 513.1 H29.6 V492.1 H40.10000000000001 L45.900000000000006 498.6 V500.1" fill="none" stroke="#c9c9c9" stroke-width="1.4"/><path d="M40.10000000000001 492.1 V498.40000000000003 H45.900000000000006" fill="none" stroke="#c9c9c9" stroke-width="1.3"/>
 <circle cx="43.7" cy="507.9" r="5.8" fill="#fff" stroke="#8fd3a3" stroke-width="1.4"/>
 <path d="M40.3 507.9 H47.1 M43.7 504.5 V511.3" stroke="#8fd3a3" stroke-width="1.5"/>
 <path d="M105.4 500.9 L110 505.3 L114.6 500.9" fill="none" stroke="#999" stroke-width="1.5"/>
 <path d="M137.6 513.0 H133.3 V491.8 H143.8 L149.4 497.7 V499.0 M143.8 491.8 V497.7 H149.4 M145.9 513.0 H149.4 V509.5" fill="none" stroke="#c9c9c9" stroke-width="1.4"/>
 <path d="M141 513.1 L142 509.1 L151.6 499.5 Q152.8 498.5 153.9 499.6 Q154.9 500.7 153.9 501.8 L144.3 511.5 Z" fill="#fff" stroke="#a9d2ee" stroke-width="1.3"/>
 <path d="M228.3 513.1 H220.8 V492.1 H231.3 L237.10000000000002 498.6 V500.1" fill="none" stroke="#333" stroke-width="1.4"/><path d="M231.3 492.1 V498.40000000000003 H237.10000000000002" fill="none" stroke="#333" stroke-width="1.3"/>
 <circle cx="234.5" cy="508.0" r="5.9" fill="#fff" stroke="#9b3fa8" stroke-width="1.4"/>
 <path d="M234.5 506.3 V511.3" stroke="#9b3fa8" stroke-width="1.5"/><circle cx="234.5" cy="504.4" r="0.8" fill="#9b3fa8"/>
 <path d="M253.2 500.9 L258 505.3 L262.8 500.9" fill="none" stroke="#111" stroke-width="1.5"/>
 <path d="M290.3 513.1 H282.8 V492.1 H293.3 L299.1 498.6 V500.1" fill="none" stroke="#c9c9c9" stroke-width="1.4"/><path d="M293.3 492.1 V498.40000000000003 H299.1" fill="none" stroke="#c9c9c9" stroke-width="1.3"/>
 <circle cx="296.8" cy="508.0" r="5.9" fill="#fff" stroke="#f2a3a3" stroke-width="1.4"/>
 <path d="M294.2 505.4 L299.4 510.6 M299.4 505.4 L294.2 510.6" stroke="#f2a3a3" stroke-width="1.4"/>
 <g fill="none" stroke="#333" stroke-width="1.4">
  <rect x="326.3" y="491.8" width="13.3" height="6.9"/>
  <path d="M326.3 510.0 H322.1 V498.7 H343.8 V510.0 H339.6"/>
  <rect x="326.3" y="505.0" width="13.3" height="8.9" fill="#fff"/>
  <path d="M329 508.1 H337 M329 511.0 H337" stroke-width="1.2"/>
 </g>
 <path d="M325 502.1 H327.8" stroke="#1a86d0" stroke-width="1.3"/>
 <path d="M355.3 500.9 L360 505.3 L364.8 500.9" fill="none" stroke="#111" stroke-width="1.5"/>
 <rect x="386.8" y="500.3" width="4.8" height="13.4" fill="#b5dbb8" stroke="#1a9a40" stroke-width="1.4"/>
 <rect x="394.7" y="492.4" width="4.8" height="21.3" fill="#f8e08a" stroke="#e87a20" stroke-width="1.4"/>
 <rect x="402.4" y="497.2" width="4.8" height="16.5" fill="#f0b8b8" stroke="#e03030" stroke-width="1.4"/>
 <path d="M415 500.9 L419.4 505.3 L423.8 500.9" fill="none" stroke="#111" stroke-width="1.5"/>
</svg>
<div class="t" style="left:56px;top:496.59px;font-size:15.60px;color:#a8a8a8;font-weight:400;transform:scaleX(0.9615);transform-origin:0 0;">Nowy</div>
<div class="t" style="left:160.5px;top:496.59px;font-size:15.60px;color:#a8a8a8;font-weight:400;transform:scaleX(0.9615);transform-origin:0 0;">Edycja</div>
<div class="a" style="left:12px;top:473px;width:305.5px;height:58.5px;border:2.3px solid #f01010;border-radius:8px;box-shadow:inset 0 5px 8px -1px rgba(0,0,0,0.13),inset 0 0 6px rgba(0,0,0,0.10),0 0 6px rgba(0,0,0,0.10);"></div>
<div class="t" style="left:1148px;top:498.37px;font-size:14.56px;color:#222;font-weight:700;transform:scaleX(0.9615);transform-origin:0 0;">Główny</div>
<svg class="a" style="left:1204px;top:497px" width="14" height="10" viewBox="1204 497 14 10" fill="none" stroke="#222" stroke-width="1.3"><path d="M1206 499.5 L1211 504.5 L1216 499.5"/></svg>
<div class="a" style="left:1144px;top:515px;width:72px;height:3px;background:#0a86d0;"></div>
<div class="a" style="left:1237px;top:494.5px;width:1px;height:17px;background:#aaa;"></div>
<svg class="a" style="left:1252px;top:488px" width="30" height="28" viewBox="1252 488 30 28">
 <path d="M1268.6 512.1 H1256.5 V492.5 H1277.2 V503.3" fill="none" stroke="#444" stroke-width="1.5"/>
 <rect x="1257.3" y="493.3" width="19.1" height="3.7" fill="#cfcfcf" stroke="#444" stroke-width="1.3"/>
 <circle cx="1271.2" cy="506.3" r="3.9" fill="#fff" stroke="#333" stroke-width="1.4"/>
 <path d="M1274 509.1 L1278.3 513.2" stroke="#333" stroke-width="1.5"/>
</svg>
<div class="t" style="left:1283px;top:497.49px;font-size:15.60px;color:#1e1e1e;font-weight:400;transform:scaleX(0.9615);transform-origin:0 0;">Podgląd</div>
<svg class="a" style="left:1350px;top:484px" width="40" height="36" viewBox="1350 484 40 36" fill="none" stroke="#333" stroke-width="1.4">
 <path d="M1358.7 500.2 A10.6 10.6 0 0 1 1379 497.5"/>
 <path d="M1379.3 491.3 V498.6 H1372"/>
 <path d="M1379.3 504.4 A10.6 10.6 0 0 1 1359 506.9"/>
 <path d="M1358.7 513.7 V506.4 H1366"/>
</svg>
<div class="t" style="left:29.8px;top:534.99px;font-size:15.60px;color:#7a7a7a;font-weight:400;transform:scaleX(0.9615);transform-origin:0 0;">Brak aktywnych filtrów</div>
<div class="a" style="left:23px;top:565px;width:1368px;height:1px;background:#e4e4e4;"></div>
<div class="a" style="left:23px;top:566px;width:1368px;height:56px;background:#f4f4f4;"></div>
<div class="a" style="left:134px;top:566px;width:157.7px;height:54px;background:#ececec;"></div>
<div class="a" style="left:268.3px;top:566px;width:23.4px;height:27.5px;background:#eaeaea;"></div>
<div class="a" style="left:447px;top:594px;width:22.5px;height:27px;background:#f0f0f0;"></div>
<div class="a" style="left:1030px;top:594px;width:21px;height:27px;background:#f0f0f0;"></div>
<div class="a" style="left:60.7px;top:593px;width:73.3px;height:1px;background:#e4e4e4;"></div>
<div class="a" style="left:291.7px;top:593px;width:1099.3px;height:1px;background:#e4e4e4;"></div>
<div class="a" style="left:268.3px;top:593px;width:23.4px;height:1px;background:#e2e2e2;"></div>
<div class="a" style="left:23px;top:621px;width:1368px;height:1px;background:#e8e8e8;"></div>
<div class="a" style="left:60.7px;top:566px;width:1px;height:55px;background:#e4e4e4;"></div>
<div class="a" style="left:134px;top:566px;width:1px;height:55px;background:#e4e4e4;"></div>
<div class="a" style="left:291.7px;top:566px;width:1px;height:55px;background:#e4e4e4;"></div>
<div class="a" style="left:778px;top:566px;width:1px;height:55px;background:#e4e4e4;"></div>
<div class="a" style="left:942px;top:566px;width:1px;height:55px;background:#e4e4e4;"></div>
<div class="a" style="left:1135px;top:566px;width:1px;height:55px;background:#e4e4e4;"></div>
<div class="a" style="left:1373px;top:566px;width:1px;height:55px;background:#e4e4e4;"></div>
<div class="a" style="left:268.3px;top:566px;width:1px;height:27px;background:#e4e4e4;"></div>
<div class="a" style="left:447px;top:594px;width:1px;height:27px;background:#e4e4e4;"></div>
<div class="a" style="left:469.4px;top:594px;width:1px;height:27px;background:#e4e4e4;"></div>
<div class="a" style="left:1030px;top:594px;width:1px;height:27px;background:#e4e4e4;"></div>
<div class="a" style="left:1051px;top:594px;width:1px;height:27px;background:#e4e4e4;"></div>
<div class="a" style="left:33px;top:601px;width:17px;height:16.5px;border:1.3px solid #c8c8c8;border-radius:4px;background:#fff;"></div>
<div class="t" style="left:67.3px;top:571.79px;font-size:15.60px;color:#1e1e1e;font-weight:400;transform:scaleX(0.9615);transform-origin:0 0;-webkit-text-stroke:0.25px #2a2a2a;">Firma</div>
<div class="t" style="left:67.3px;top:597.79px;font-size:15.60px;color:#1e1e1e;font-weight:400;transform:scaleX(0.9615);transform-origin:0 0;-webkit-text-stroke:0.25px #2a2a2a;">Numer</div>
<div class="t" style="left:139.8px;top:572.32px;font-size:14.98px;color:#1e1e1e;font-weight:700;transform:scaleX(0.9615);transform-origin:0 0;">Grupa kapitałowa</div>
<div class="t" style="left:139.8px;top:598.32px;font-size:14.98px;color:#1e1e1e;font-weight:700;transform:scaleX(0.9615);transform-origin:0 0;">Logo</div>
<div class="a" style="left:134px;top:617.7px;width:157.7px;height:2.5px;background:#0a86d0;"></div>
<div class="t" style="left:298.5px;top:571.79px;font-size:15.60px;color:#1e1e1e;font-weight:400;transform:scaleX(0.9615);transform-origin:0 0;-webkit-text-stroke:0.25px #2a2a2a;">Podmiot powiązany</div>
<div class="t" style="left:298.5px;top:597.79px;font-size:15.60px;color:#1e1e1e;font-weight:400;transform:scaleX(0.9615);transform-origin:0 0;-webkit-text-stroke:0.25px #2a2a2a;">Logo</div>
<div class="t" style="left:476px;top:597.79px;font-size:15.60px;color:#1e1e1e;font-weight:400;transform:scaleX(0.9615);transform-origin:0 0;-webkit-text-stroke:0.25px #2a2a2a;">Nazwa</div>
<div class="t" style="left:784px;top:571.79px;font-size:15.60px;color:#1e1e1e;font-weight:400;transform:scaleX(0.9615);transform-origin:0 0;-webkit-text-stroke:0.25px #2a2a2a;">Podmiot nadrzędny</div>
<div class="t" style="left:784px;top:597.79px;font-size:15.60px;color:#1e1e1e;font-weight:400;transform:scaleX(0.9615);transform-origin:0 0;-webkit-text-stroke:0.25px #2a2a2a;">Logo</div>
<div class="t" style="left:949px;top:571.79px;font-size:15.60px;color:#1e1e1e;font-weight:400;transform:scaleX(0.9615);transform-origin:0 0;-webkit-text-stroke:0.25px #2a2a2a;">Data obowiązywania</div>
<div class="t" style="left:949px;top:597.79px;font-size:15.60px;color:#1e1e1e;font-weight:400;transform:scaleX(0.9615);transform-origin:0 0;-webkit-text-stroke:0.25px #2a2a2a;">Od</div>
<div class="t" style="left:1058px;top:597.79px;font-size:15.60px;color:#1e1e1e;font-weight:400;transform:scaleX(0.9615);transform-origin:0 0;-webkit-text-stroke:0.25px #2a2a2a;">Do</div>
<div class="t" style="left:1142px;top:571.79px;font-size:15.60px;color:#1e1e1e;font-weight:400;transform:scaleX(0.9615);transform-origin:0 0;-webkit-text-stroke:0.25px #2a2a2a;">Rodzaj powiązania</div>
<div class="t" style="left:1142px;top:597.79px;font-size:15.60px;color:#1e1e1e;font-weight:400;transform:scaleX(0.9615);transform-origin:0 0;-webkit-text-stroke:0.25px #2a2a2a;">(wg UoR)</div>
<svg class="a" style="left:272px;top:570.5px" width="20" height="20" viewBox="272 570.5 20 20"><path d="M279.9 583.5 V573.0 M274.8 578.1 L279.9 572.9 L285 578.1" fill="none" stroke="#333" stroke-width="1.3"/></svg>
<div class="t" style="left:285px;top:581.1px;font-size:10.5px;color:#222;">1</div>
<svg class="a" style="left:450.4px;top:598.4px" width="20" height="20" viewBox="450.4 598.4 20 20"><path d="M458.29999999999995 611.4 V600.9 M453.2 606.0 L458.29999999999995 600.8 L463.4 606.0" fill="none" stroke="#333" stroke-width="1.3"/></svg>
<div class="t" style="left:463.4px;top:609.0px;font-size:10.5px;color:#222;">3</div>
<svg class="a" style="left:1032.6px;top:598.4px" width="20" height="20" viewBox="1032.6 598.4 20 20"><path d="M1040.5 611.4 V600.9 M1035.3999999999999 606.0 L1040.5 600.8 L1045.6 606.0" fill="none" stroke="#333" stroke-width="1.3"/></svg>
<div class="t" style="left:1045.6px;top:609.0px;font-size:10.5px;color:#222;">2</div>
<svg class="a" style="left:1374px;top:570px" width="17" height="50" viewBox="1374 570 17 50"><path d="M1385.5 586 L1379.5 593 L1385.5 600" fill="none" stroke="#aaa" stroke-width="1.2"/></svg>
<div class="a" style="left:60.7px;top:624px;width:1px;height:115px;background:#ececec;"></div>
<div class="a" style="left:27px;top:625px;width:33.7px;height:24px;background:#eeeeee;"></div>
<div class="a" style="left:23px;top:680px;width:1368px;height:1px;background:#e8e8e8;"></div>
<div class="a" style="left:23px;top:709.4px;width:1368px;height:1px;background:#e8e8e8;"></div>
<div class="a" style="left:23px;top:739px;width:1368px;height:1px;background:#e8e8e8;"></div>
<div class="a" style="left:33px;top:629.0px;width:17px;height:16.5px;border:1.3px solid #c8c8c8;border-radius:4px;background:#fff;"></div>
<div class="t" style="right:1367.5px;top:629.59px;font-size:15.60px;color:#1e1e1e;font-weight:400;transform:scaleX(0.9615);transform-origin:100% 0;">1</div>
<div class="t" style="left:144.3px;top:629.59px;font-size:15.60px;color:#1e1e1e;font-weight:400;transform:scaleX(0.9615);transform-origin:0 0;letter-spacing:-0.6px;">GRUPAKAP</div>
<div class="t" style="left:301.8px;top:629.59px;font-size:15.60px;color:#1e1e1e;font-weight:400;transform:scaleX(0.9615);transform-origin:0 0;letter-spacing:-0.2px;">01-F-000-0</div>
<div class="t" style="left:479.6px;top:629.59px;font-size:15.60px;color:#1e1e1e;font-weight:400;transform:scaleX(0.9615);transform-origin:0 0;">Nasza firma 0 - oddział</div>
<div class="t" style="left:952.8px;top:629.59px;font-size:15.60px;color:#1e1e1e;font-weight:400;transform:scaleX(0.9615);transform-origin:0 0;">2018-01-01</div>
<div class="t" style="left:1061.9px;top:629.59px;font-size:15.60px;color:#1e1e1e;font-weight:400;transform:scaleX(0.9615);transform-origin:0 0;">2024-05-3</div>
<div class="t" style="left:1146px;top:629.24px;font-size:16.02px;color:#1e1e1e;font-weight:400;transform:scaleX(0.9615);transform-origin:0 0;">Jednostka powiązana - kapitałowo</div>
<div class="a" style="left:33px;top:657.0px;width:17px;height:16.5px;border:1.3px solid #c8c8c8;border-radius:4px;background:#fff;"></div>
<div class="t" style="right:1367.5px;top:659.19px;font-size:15.60px;color:#1e1e1e;font-weight:400;transform:scaleX(0.9615);transform-origin:100% 0;">1</div>
<div class="t" style="left:144.3px;top:659.19px;font-size:15.60px;color:#1e1e1e;font-weight:400;transform:scaleX(0.9615);transform-origin:0 0;letter-spacing:-0.6px;">GRUPAKAP</div>
<div class="t" style="left:301.8px;top:659.19px;font-size:15.60px;color:#1e1e1e;font-weight:400;transform:scaleX(0.9615);transform-origin:0 0;letter-spacing:-0.2px;">07-F-000-C</div>
<div class="t" style="left:479.6px;top:659.19px;font-size:15.60px;color:#1e1e1e;font-weight:400;transform:scaleX(0.9615);transform-origin:0 0;">Nasza firma 0 - centrala</div>
<div class="t" style="left:952.8px;top:659.19px;font-size:15.60px;color:#1e1e1e;font-weight:400;transform:scaleX(0.9615);transform-origin:0 0;">2018-01-01</div>
<div class="t" style="left:1146px;top:658.84px;font-size:16.02px;color:#1e1e1e;font-weight:400;transform:scaleX(0.9615);transform-origin:0 0;">Jednostka powiązana - kapitałowo</div>
<div class="a" style="left:33px;top:686.5px;width:17px;height:16.5px;border:1.3px solid #c8c8c8;border-radius:4px;background:#fff;"></div>
<div class="t" style="right:1367.5px;top:688.49px;font-size:15.60px;color:#1e1e1e;font-weight:400;transform:scaleX(0.9615);transform-origin:100% 0;">1</div>
<div class="t" style="left:144.3px;top:688.49px;font-size:15.60px;color:#1e1e1e;font-weight:400;transform:scaleX(0.9615);transform-origin:0 0;letter-spacing:-0.6px;">GRUPAKAP</div>
<div class="t" style="left:301.8px;top:688.49px;font-size:15.60px;color:#1e1e1e;font-weight:400;transform:scaleX(0.9615);transform-origin:0 0;letter-spacing:-0.2px;">14-F-000-0</div>
<div class="t" style="left:479.6px;top:688.49px;font-size:15.60px;color:#1e1e1e;font-weight:400;transform:scaleX(0.9615);transform-origin:0 0;">Nasza firma 0 - oddział</div>
<div class="t" style="left:952.8px;top:688.49px;font-size:15.60px;color:#1e1e1e;font-weight:400;transform:scaleX(0.9615);transform-origin:0 0;">2018-01-01</div>
<div class="t" style="left:1146px;top:688.14px;font-size:16.02px;color:#1e1e1e;font-weight:400;transform:scaleX(0.9615);transform-origin:0 0;">Jednostka powiązana - kapitałowo</div>
<div class="a" style="left:33px;top:715.8px;width:17px;height:16.5px;border:1.3px solid #c8c8c8;border-radius:4px;background:#fff;"></div>
<div class="t" style="right:1367.5px;top:717.99px;font-size:15.60px;color:#1e1e1e;font-weight:400;transform:scaleX(0.9615);transform-origin:100% 0;">1</div>
<div class="t" style="left:144.3px;top:717.99px;font-size:15.60px;color:#1e1e1e;font-weight:400;transform:scaleX(0.9615);transform-origin:0 0;letter-spacing:-0.6px;">GRUPAKAP</div>
<div class="t" style="left:301.8px;top:717.99px;font-size:15.60px;color:#1e1e1e;font-weight:400;transform:scaleX(0.9615);transform-origin:0 0;letter-spacing:-0.2px;">01-F-000-0</div>
<div class="t" style="left:479.6px;top:717.99px;font-size:15.60px;color:#1e1e1e;font-weight:400;transform:scaleX(0.9615);transform-origin:0 0;">Nasza firma 0 - oddział</div>
<div class="t" style="left:952.8px;top:717.99px;font-size:15.60px;color:#1e1e1e;font-weight:400;transform:scaleX(0.9615);transform-origin:0 0;">2024-06-01</div>
<div class="t" style="left:1146px;top:717.64px;font-size:16.02px;color:#1e1e1e;font-weight:400;transform:scaleX(0.9615);transform-origin:0 0;">Jednostka powiązana - kapitałowo</div>
<div class="a" style="left:23px;top:622.4px;width:1368px;height:2.3px;background:#5b5b5b;"></div>
<div class="a" style="left:23px;top:649px;width:1368px;height:3px;background:#5f5f5f;"></div>
<div class="a" style="left:23px;top:624.5px;width:3.5px;height:24.5px;background:#0a6eab;"></div>
<div class="a" style="left:134px;top:622.5px;width:157.7px;height:29.4px;border:3.8px solid #0a6eab;"></div>
<div class="a" style="left:23px;top:566px;width:1px;height:197px;background:#ededed;"></div>
<div class="a" style="left:23px;top:762.4px;width:1368px;height:1px;background:#e4e4e4;"></div>
<svg class="a" style="left:26px;top:766px" width="12" height="14" viewBox="26 766 12 14"><path d="M34.5 768.4 L28.8 773 L34.5 777.6" fill="none" stroke="#c4c4c4" stroke-width="1.1"/></svg>
<div class="a" style="left:39px;top:768px;width:649px;height:10px;background:#e6e6e6;border-radius:6px;"></div>
<svg class="a" style="left:1378px;top:766px" width="12" height="14" viewBox="1378 766 12 14"><path d="M1380.5 768.4 L1386.3 773 L1380.5 777.6" fill="none" stroke="#d0d0d0" stroke-width="1.1"/></svg>
</body></html>
